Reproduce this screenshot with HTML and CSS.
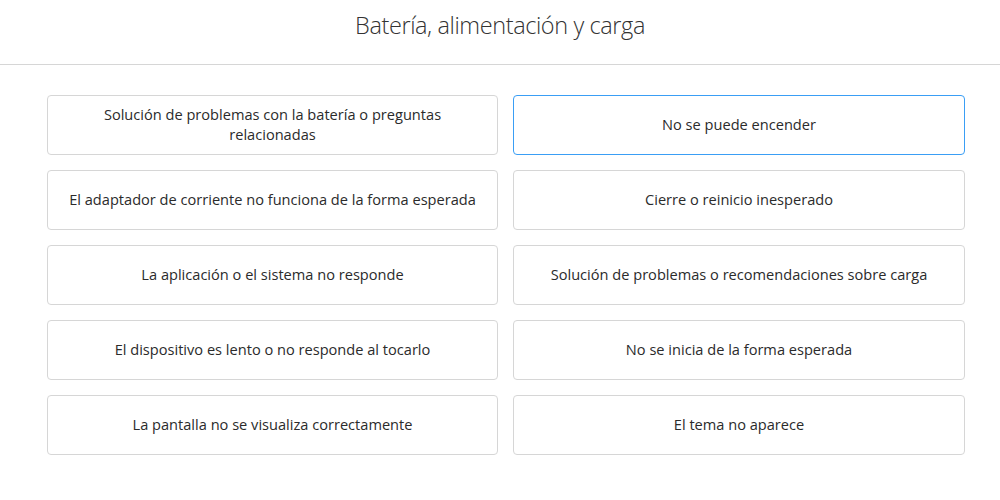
FILE: index.html
```html
<!DOCTYPE html>
<html lang="es">
<head>
<meta charset="utf-8">
<link rel="stylesheet" href="styles.css">
</head>
<body>
<header class="head"><h1 class="title">Batería, alimentación y carga</h1></header>
<main class="grid">
  <a class="card">Solución de problemas con la batería o preguntas relacionadas</a>
  <a class="card card-active">No se puede encender</a>
  <a class="card">El adaptador de corriente no funciona de la forma esperada</a>
  <a class="card">Cierre o reinicio inesperado</a>
  <a class="card">La aplicación o el sistema no responde</a>
  <a class="card">Solución de problemas o recomendaciones sobre carga</a>
  <a class="card">El dispositivo es lento o no responde al tocarlo</a>
  <a class="card">No se inicia de la forma esperada</a>
  <a class="card">La pantalla no se visualiza correctamente</a>
  <a class="card">El tema no aparece</a>
</main>
</body>
</html>
```
FILE: styles.css
```css
html, body { margin: 0; padding: 0; background: #fff; }
body { font-family: "Open Sans", "Liberation Sans", sans-serif; color: #333; }
.head { height: 64px; border-bottom: 1px solid #d6d6d6; display: flex; align-items: center; justify-content: center; }
.title { margin: 0; font-weight: 300; font-size: 23.5px; letter-spacing: -0.4px; color: #333; padding-bottom: 14px; }
.grid { display: grid; grid-template-columns: 451px 452px; column-gap: 15px; row-gap: 15px; padding: 30px 0 0 47px; }
.card { height: 60px; box-sizing: border-box; border: 1px solid #d6d6d6; border-radius: 4px; display: flex; align-items: center; justify-content: center; text-align: center; padding: 0 16px 2px; font-size: 14.6px; line-height: 20px; color: #2b2b2b; }
.card-active { border-color: #3a9ef5; }
```
